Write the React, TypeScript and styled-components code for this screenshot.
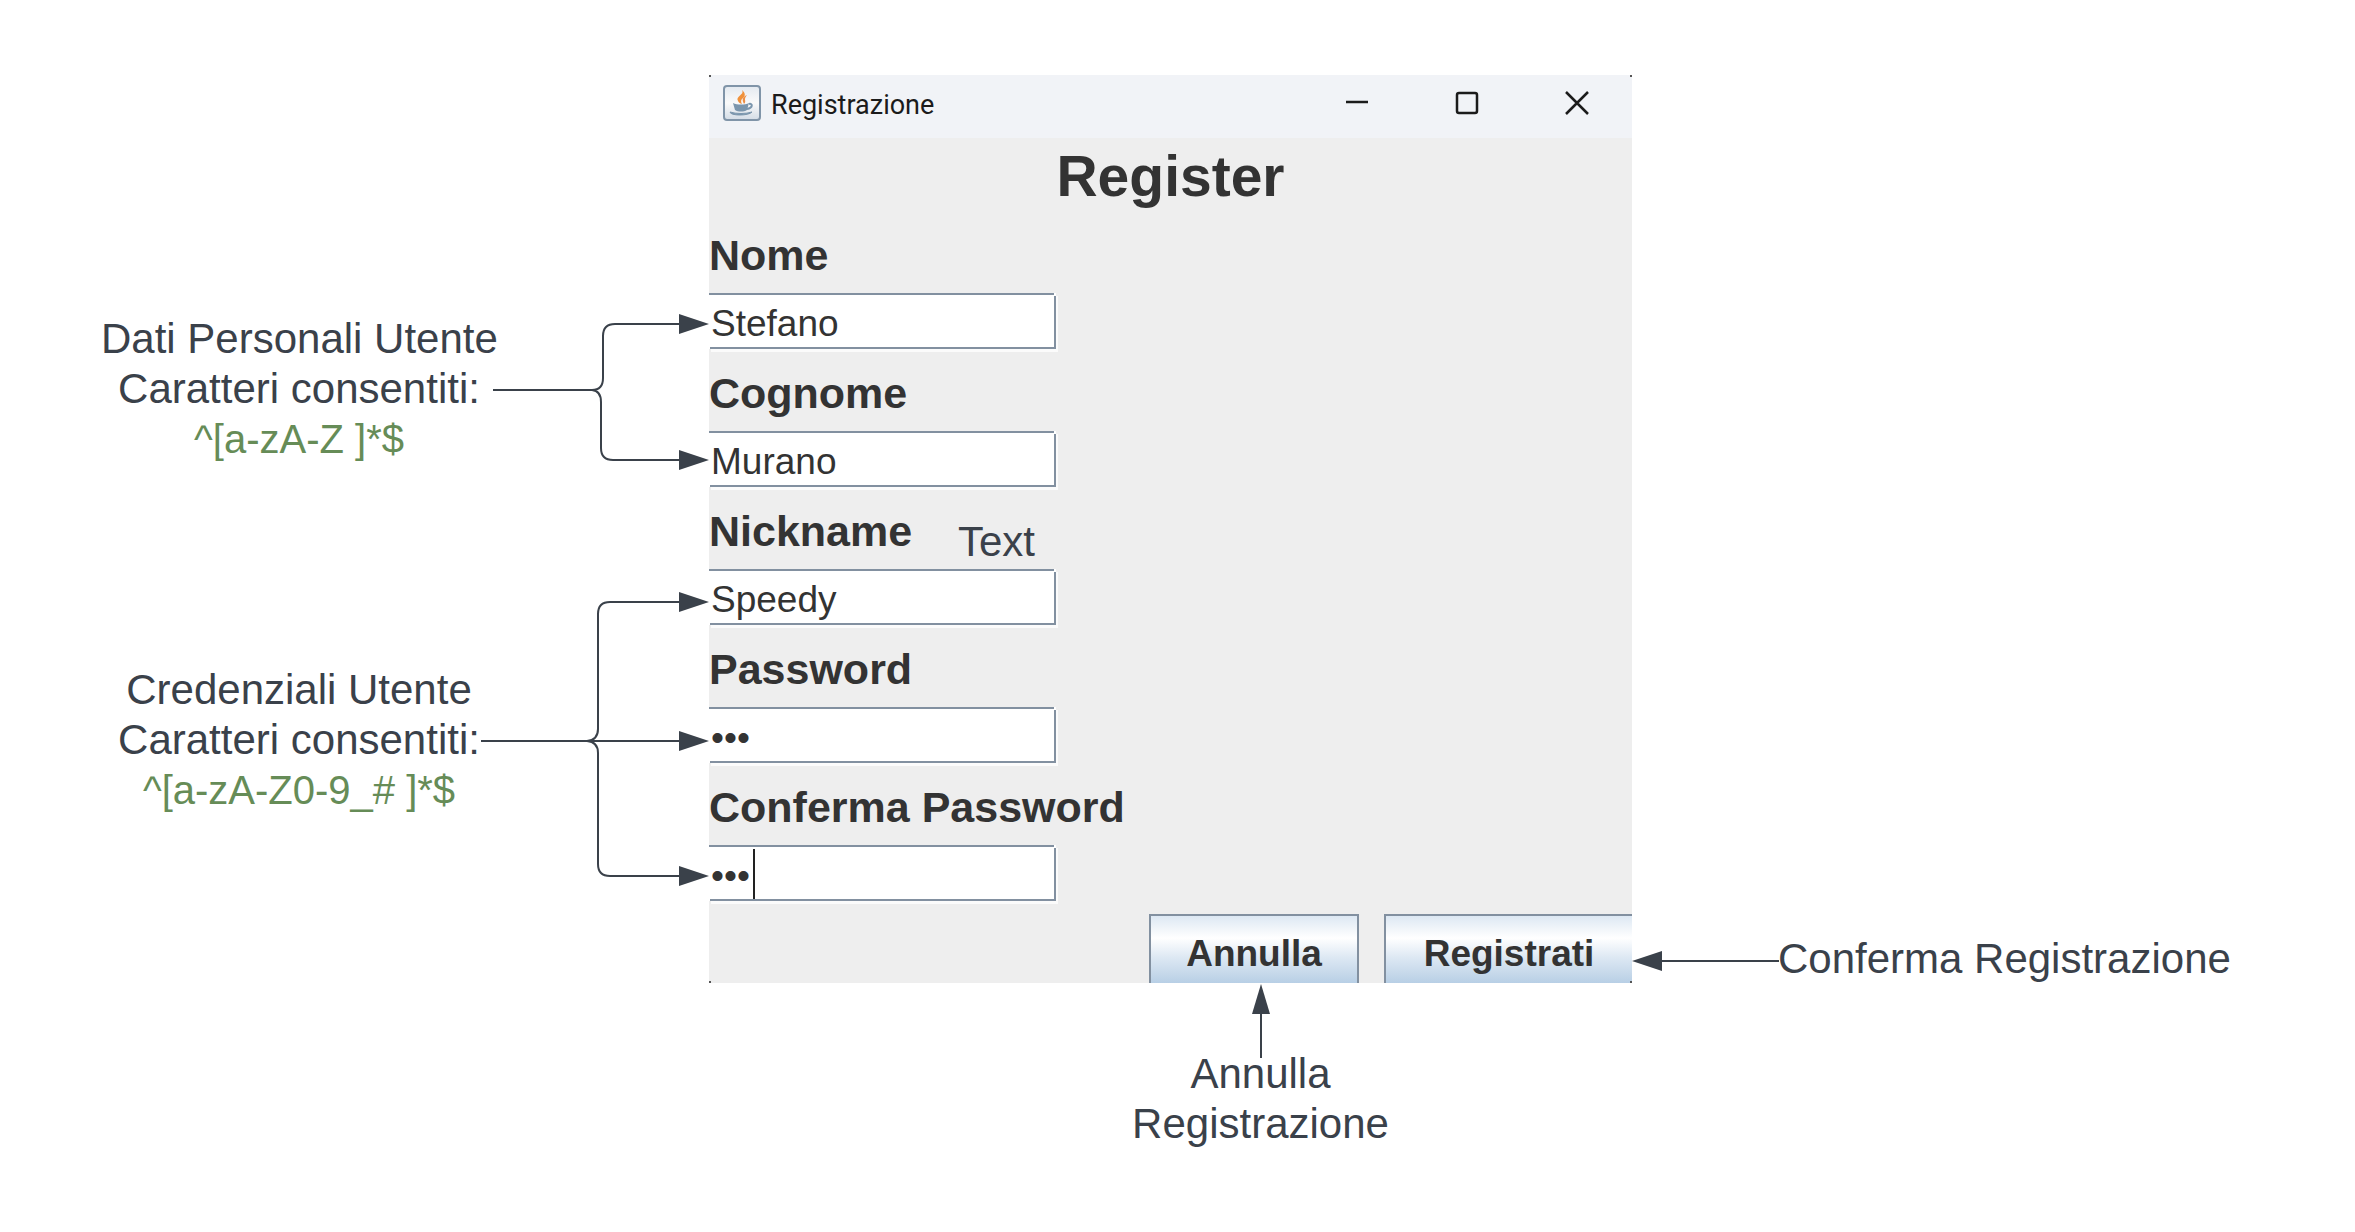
import React from 'react';
import styled, { createGlobalStyle } from 'styled-components';

const INK = '#3a414a';
const SANS = '"Liberation Sans", Arial, sans-serif';

const GlobalStyle = createGlobalStyle`
  *, *::before, *::after { box-sizing: border-box; }
  body { margin: 0; background: #fff; font-family: ${SANS}; }
`;

const Board = styled.main`
  display: grid;
  grid-template-columns: 709fr 923fr 723fr;
  align-items: start;
  padding-top: 75px;
`;

/* ---------- annotations ---------- */

const LeftNotes = styled.aside`
  display: flex;
  flex-direction: column;
  align-items: flex-end;
  gap: 120px;
  padding-top: 231px;
`;

const NoteRow = styled.div`
  display: flex;
  align-items: center;
`;

const NoteText = styled.p<{ $width?: number }>`
  margin: 0;
  padding-top: 2px;
  width: ${(p) => (p.$width ? `${p.$width}px` : 'auto')};
  color: ${INK};
  font-size: 42px;
  line-height: 50px;
  text-align: center;
  white-space: nowrap;
`;

const Pattern = styled.span`
  color: #668c57;
  font-size: 40px;
`;

const Connector = styled.svg`
  display: block;
  flex: none;
  overflow: visible;
  fill: none;
  stroke: ${INK};
  stroke-width: 2;
  polygon {
    fill: ${INK};
    stroke: none;
  }
`;

const RightNotes = styled.aside`
  padding-top: 857px;
`;

const BottomNote = styled.div`
  display: flex;
  flex-direction: column;
  align-items: center;
  padding-left: 180px;
`;

const FloatingNote = styled(NoteText)`
  position: absolute;
  left: 249px;
  top: 440px;
`;

/* ---------- window ---------- */

const Window = styled.section`
  position: relative;
  overflow: hidden;
  background: #eeeeee;
  color: #333;

  &::after {
    content: '';
    position: absolute;
    inset: 0;
    pointer-events: none;
    background:
      linear-gradient(#555, #555) left top,
      linear-gradient(#555, #555) right top,
      linear-gradient(#555, #555) left bottom,
      linear-gradient(#555, #555) right bottom;
    background-size: 2px 2px;
    background-repeat: no-repeat;
  }
`;

const TitleBar = styled.header`
  display: flex;
  align-items: center;
  height: 63px;
  padding: 0 0 8px 14px;
  background: #f1f3f7;
`;

const Title = styled.span`
  flex: 1;
  padding: 4px 0 0 10px;
  color: #1b1b1b;
  font: 27px/32px Roboto, sans-serif;
`;

const ControlButton = styled.button`
  display: grid;
  place-items: center;
  width: 110px;
  height: 55px;
  padding: 0;
  border: 0;
  background: none;
  svg {
    fill: none;
    stroke: #1b1b1b;
    stroke-width: 2.5;
  }
`;

const Heading = styled.h1`
  margin: 0;
  padding: 5px 0 21px;
  font-size: 57px;
  line-height: 66px;
  text-align: center;
`;

const Fields = styled.div`
  display: flex;
  flex-direction: column;
  gap: 19px;
`;

const Field = styled.div`
  display: flex;
  flex-direction: column;
  align-items: flex-start;
  gap: 13px;
`;

const Label = styled.label`
  font-size: 43px;
  font-weight: 700;
  line-height: 50px;
`;

const InputBox = styled.div`
  position: relative;
  width: 347px;
`;

const Input = styled.input`
  display: block;
  width: 100%;
  height: 56px;
  padding: 6px 4px 0 2px;
  border: 0;
  border-radius: 0;
  outline: 0;
  color: #333;
  font: 37px/42px ${SANS};
  background:
    linear-gradient(#8290a0, #8290a0) left top / calc(100% - 2px) 2px no-repeat,
    linear-gradient(#8290a0, #8290a0) right bottom / 2px calc(100% - 3px) no-repeat,
    linear-gradient(#8290a0, #8290a0) right bottom / calc(100% - 1px) 2px no-repeat,
    #fff;
  box-shadow: 2px 3px 0 #fbfbfb;
`;

const Caret = styled.span`
  position: absolute;
  left: 44px;
  top: 4px;
  width: 2px;
  height: 50px;
  background: #222;
`;

const Actions = styled.div`
  display: flex;
  justify-content: flex-end;
  gap: 25px;
  margin: 13px -2px 0 0;
`;

const ActionButton = styled.button<{ $width: number }>`
  width: ${(p) => p.$width}px;
  height: 69px;
  padding: 17px 0 8px;
  border: 2px solid #8290a0;
  border-bottom: 0;
  border-radius: 0;
  color: #333;
  font: 700 37px/42px ${SANS};
  background: linear-gradient(#dde8f3 0%, #ffffff 33%, #dde8f3 62%, #b8cfe5 100%);
`;

const fields = [
  { id: 'nome', label: 'Nome', type: 'text', value: 'Stefano' },
  { id: 'cognome', label: 'Cognome', type: 'text', value: 'Murano' },
  { id: 'nickname', label: 'Nickname', type: 'text', value: 'Speedy' },
  { id: 'password', label: 'Password', type: 'password', value: 'abc' },
  { id: 'conferma', label: 'Conferma Password', type: 'password', value: 'abc', caret: true },
];

const JavaIcon = () => (
  <svg width="38" height="36" viewBox="0 0 38 36" aria-hidden="true">
    <defs>
      <linearGradient id="tile" x1="0" y1="0" x2="0" y2="1">
        <stop offset="0" stopColor="#e3e9f0" />
        <stop offset="0.5" stopColor="#fafafa" />
        <stop offset="1" stopColor="#d3dce6" />
      </linearGradient>
    </defs>
    <rect x="1" y="1" width="36" height="34" rx="3" fill="url(#tile)" stroke="#8094a8" strokeWidth="2" />
    <path d="M19 5c3 5-7 6-4 11 1 2 2 2 4 3-2-4 0-5 2-7 2-3 0-5-2-7z" fill="#f0913a" />
    <path d="M24 10c-5 2-5 5-3 9 2-2 1-3 1-5 0-1 1-3 2-4z" fill="#ee8f45" />
    <path d="M10 18c4 2 12 2 16 0l-2 7c-3 2-9 2-12 0z" fill="#7b96ad" />
    <path d="M26 19c4-1 4 4-2 5" fill="none" stroke="#7b96ad" strokeWidth="2" />
    <path d="M7 27c0 4 19 4 22 0-6 2-16 2-22 0z" fill="#7b96ad" stroke="#7b96ad" strokeWidth="1" />
  </svg>
);

export default function App() {
  return (
    <>
      <GlobalStyle />
      <Board>
        <LeftNotes>
          <NoteRow>
            <NoteText $width={396}>
              Dati Personali Utente
              <br />
              Caratteri consentiti:
              <br />
              <Pattern>^[a-zA-Z ]*$</Pattern>
            </NoteText>
            <Connector width="212" height="164" aria-hidden="true">
              <path d="M-4 84H95Q106 84 106 72V30Q106 18 118 18H184" />
              <path d="M95 84Q104 85 104 96V142Q104 154 116 154H184" />
              <polygon points="182,8 212,18 182,28" />
              <polygon points="182,144 212,154 182,164" />
            </Connector>
          </NoteRow>
          <NoteRow>
            <NoteText $width={396}>
              Credenziali Utente
              <br />
              Caratteri consentiti:
              <br />
              <Pattern>^[a-zA-Z0-9_# ]*$</Pattern>
            </NoteText>
            <Connector width="212" height="298" aria-hidden="true">
              <path d="M-16 151H184" />
              <path d="M90 151Q101 150 101 139V24Q101 12 113 12H184" />
              <path d="M90 151Q101 152 101 163V274Q101 286 113 286H184" />
              <polygon points="182,2 212,12 182,22" />
              <polygon points="182,141 212,151 182,161" />
              <polygon points="182,276 212,286 182,296" />
            </Connector>
          </NoteRow>
        </LeftNotes>

        <div>
          <Window>
            <TitleBar>
              <JavaIcon />
              <Title>Registrazione</Title>
              <ControlButton type="button" aria-label="Riduci a icona">
                <svg width="24" height="24">
                  <path d="M1 11H23" />
                </svg>
              </ControlButton>
              <ControlButton type="button" aria-label="Ingrandisci">
                <svg width="24" height="24">
                  <rect x="2" y="2" width="20" height="20" rx="2" />
                </svg>
              </ControlButton>
              <ControlButton type="button" aria-label="Chiudi">
                <svg width="24" height="24">
                  <path d="M1 1L23 23M23 1L1 23" />
                </svg>
              </ControlButton>
            </TitleBar>
            <form onSubmit={(e) => e.preventDefault()}>
              <Heading>Register</Heading>
              <Fields>
                {fields.map((f) => (
                  <Field key={f.id}>
                    <Label htmlFor={f.id}>{f.label}</Label>
                    <InputBox>
                      <Input id={f.id} type={f.type} defaultValue={f.value} autoComplete="off" />
                      {f.caret && <Caret />}
                    </InputBox>
                  </Field>
                ))}
              </Fields>
              <Actions>
                <ActionButton type="button" $width={210}>
                  Annulla
                </ActionButton>
                <ActionButton type="submit" $width={250}>
                  Registrati
                </ActionButton>
              </Actions>
            </form>
            <FloatingNote>Text</FloatingNote>
          </Window>
          <BottomNote>
            <Connector width="20" height="64" aria-hidden="true">
              <path d="M10 28V75" />
              <polygon points="10,1 19,31 1,31" />
            </Connector>
            <NoteText>
              Annulla
              <br />
              Registrazione
            </NoteText>
          </BottomNote>
        </div>

        <RightNotes>
          <NoteRow>
            <Connector width="146" height="50" aria-hidden="true">
              <path d="M28 28H147" />
              <polygon points="0,28 30,18 30,38" />
            </Connector>
            <NoteText>Conferma Registrazione</NoteText>
          </NoteRow>
        </RightNotes>
      </Board>
    </>
  );
}
